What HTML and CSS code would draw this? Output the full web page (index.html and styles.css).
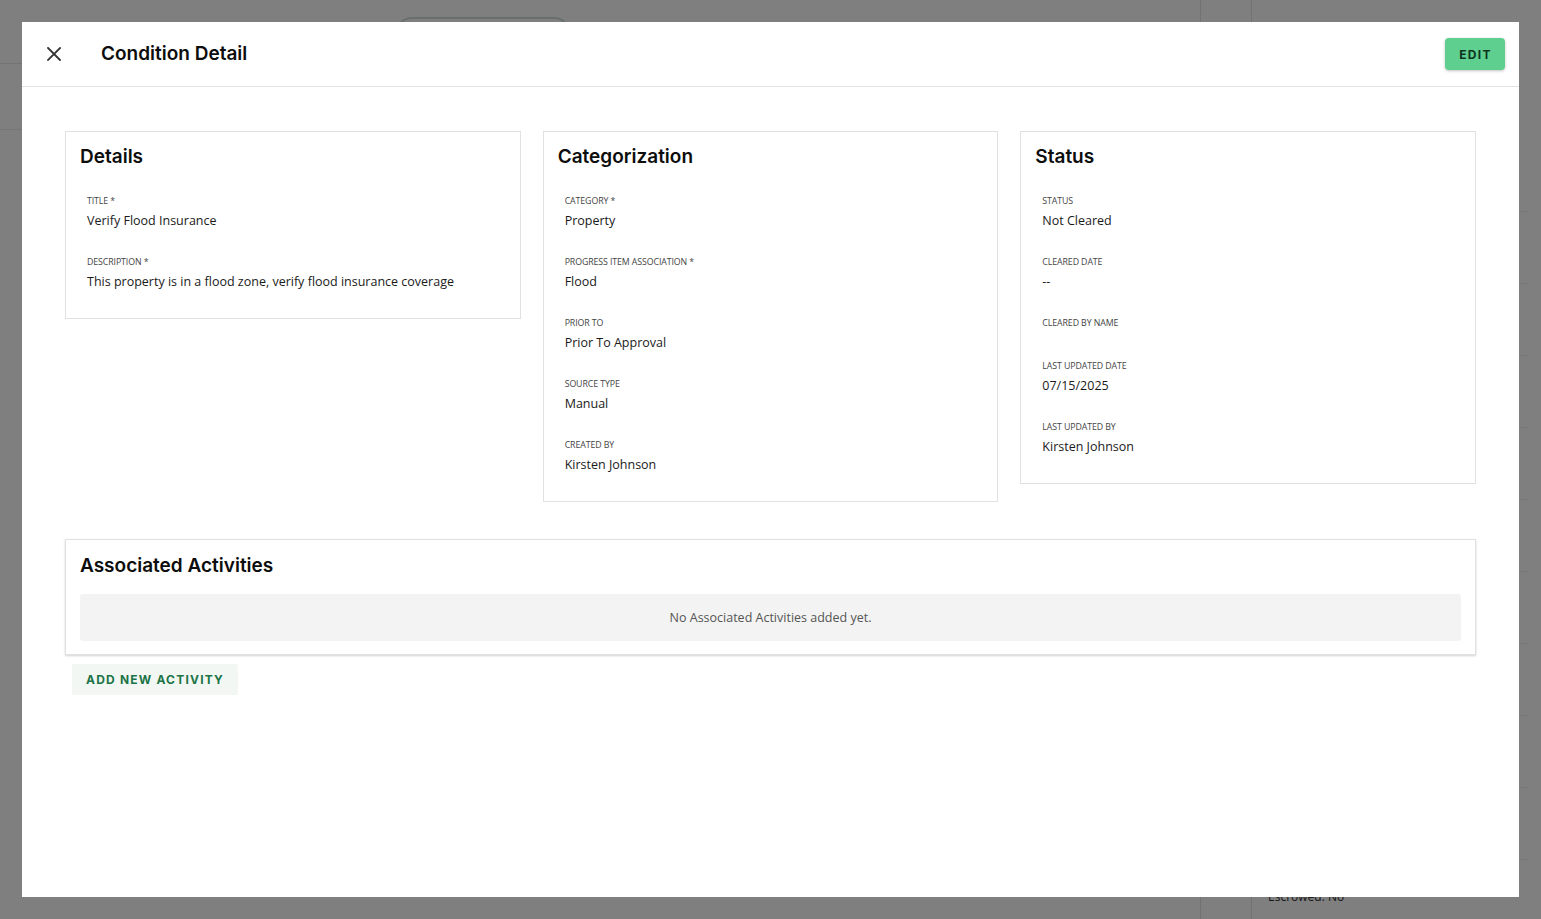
FILE: index.html
```html
<!DOCTYPE html>
<html lang="en">
<head>
<meta charset="utf-8">
<title>Condition Detail</title>
<link rel="stylesheet" href="styles.css">
</head>
<body>
<div class="page">
  <div class="page-main">
    <div class="page-header"><span class="page-pill"></span></div>
    <div class="page-subbar"></div>
  </div>
  <div class="page-gutter"></div>
  <div class="page-side">
    <div class="side-row"></div>
    <div class="side-row"></div>
    <div class="side-row"></div>
    <div class="side-row"></div>
    <div class="side-row"></div>
    <div class="side-row"></div>
    <div class="side-row"></div>
    <div class="side-row"></div>
    <div class="side-row"></div>
    <div class="side-row"></div>
    <div class="side-foot">Escrowed: No</div>
  </div>
</div>
<div class="backdrop"></div>

<div class="modal" role="dialog" aria-label="Condition Detail">
  <header class="modal-header">
    <button class="close-btn" aria-label="Close">
      <svg width="14" height="14" viewBox="0 0 14 14"><path d="M1 1 L13 13 M13 1 L1 13" stroke="#333" stroke-width="1.8" stroke-linecap="square" fill="none"/></svg>
    </button>
    <h1 class="modal-title">Condition Detail</h1>
    <button class="edit-btn">EDIT</button>
  </header>

  <div class="modal-body">
    <div class="cards">
      <section class="card">
        <h2 class="card-title">Details</h2>
        <div class="fields">
          <div class="field"><div class="label">Title *</div><div class="value">Verify Flood Insurance</div></div>
          <div class="field"><div class="label">Description *</div><div class="value">This property is in a flood zone, verify flood insurance coverage</div></div>
        </div>
      </section>

      <section class="card">
        <h2 class="card-title">Categorization</h2>
        <div class="fields">
          <div class="field"><div class="label">Category *</div><div class="value">Property</div></div>
          <div class="field"><div class="label">Progress Item Association *</div><div class="value">Flood</div></div>
          <div class="field"><div class="label">Prior To</div><div class="value">Prior To Approval</div></div>
          <div class="field"><div class="label">Source Type</div><div class="value">Manual</div></div>
          <div class="field"><div class="label">Created By</div><div class="value">Kirsten Johnson</div></div>
        </div>
      </section>

      <section class="card">
        <h2 class="card-title">Status</h2>
        <div class="fields">
          <div class="field"><div class="label">Status</div><div class="value">Not Cleared</div></div>
          <div class="field"><div class="label">Cleared Date</div><div class="value">--</div></div>
          <div class="field"><div class="label">Cleared By Name</div><div class="value empty"></div></div>
          <div class="field"><div class="label">Last Updated Date</div><div class="value">07/15/2025</div></div>
          <div class="field"><div class="label">Last Updated By</div><div class="value">Kirsten Johnson</div></div>
        </div>
      </section>
    </div>

    <section class="card activities">
      <h2 class="card-title">Associated Activities</h2>
      <div class="empty-box">No Associated Activities added yet.</div>
    </section>

    <button class="add-btn">ADD NEW ACTIVITY</button>
  </div>
</div>
</body>
</html>
```

FILE: styles.css
```css
* { box-sizing: border-box; }

html, body {
  margin: 0;
  padding: 0;
  height: 919px;
  overflow: hidden;
  font-family: "Segoe UI", "Open Sans", "Noto Sans", sans-serif;
}

/* underlying page (dimmed) */
.page {
  display: grid;
  grid-template-columns: 1200px 52px 1fr;
  height: 919px;
  background: #fff;
}
.page-header {
  height: 64px;
  border-bottom: 1px solid #e6e6e6;
  padding: 17px 0 0 395px;
}
.page-pill {
  display: block;
  width: 176px;
  height: 34px;
  border: 2px solid #cfe0d8;
  border-radius: 17px;
}
.page-subbar {
  height: 66px;
  border-bottom: 1px solid #ececec;
}
.page-gutter {
  border-left: 1px solid #e4e4e4;
  border-right: 1px solid #e4e4e4;
}
.page-side {
  display: flex;
  flex-direction: column;
  padding: 140px 12px 0 16px;
}
.side-row {
  height: 72px;
  border-bottom: 1px solid #f0f0f0;
}
.side-foot {
  margin-top: auto;
  padding-bottom: 14px;
  font-size: 12px;
  color: #333;
}

.backdrop {
  position: fixed;
  inset: 0;
  background: rgba(0, 0, 0, 0.5);
}

/* modal */
.modal {
  position: absolute;
  left: 22px;
  top: 22px;
  width: 1497px;
  height: 875px;
  background: #fff;
  display: flex;
  flex-direction: column;
}

.modal-header {
  height: 65px;
  flex: none;
  border-bottom: 1px solid #e2e2e2;
  display: flex;
  align-items: center;
  padding: 0 14px 0 25px;
}

.close-btn {
  width: 14px;
  height: 14px;
  padding: 0;
  border: 0;
  background: none;
  display: flex;
}

.modal-title {
  margin: -2px 0 0 40px;
  font-family: "Inter", "Open Sans", sans-serif;
  font-weight: 600;
  font-size: 19px;
  color: #0d0d0d;
  flex: 1;
}

.edit-btn {
  width: 60px;
  height: 32px;
  border: 0;
  border-radius: 4px;
  background: #5fcf8f;
  color: #0c3520;
  font-family: "Inter", "Open Sans", sans-serif;
  font-weight: 700;
  font-size: 12px;
  letter-spacing: 1.3px;
  box-shadow: 0 1px 3px rgba(0, 0, 0, 0.25);
  padding: 0 0 0 1px;
}

.modal-body {
  padding: 44px 43px 0 43px;
}

.cards {
  display: grid;
  grid-template-columns: repeat(3, 1fr);
  column-gap: 22px;
  align-items: start;
}

.card {
  border: 1px solid #e1e1e1;
  padding: 13px 14px 26px 14px;
}

.card-title {
  margin: 0;
  font-family: "Inter", "Open Sans", sans-serif;
  font-weight: 600;
  font-size: 19px;
  line-height: 24px;
  color: #0d0d0d;
}

.fields {
  padding: 26px 7px 0 7px;
  display: flex;
  flex-direction: column;
  gap: 25px;
}

.label {
  font-size: 8.8px;
  line-height: 12px;
  text-transform: uppercase;
  color: #444;
  letter-spacing: -0.1px;
}

.value {
  margin-top: 4px;
  font-size: 12.5px;
  line-height: 20px;
  color: #1a1a1a;
}
.value.empty {
  min-height: 2px;
  line-height: 2px;
}

.activities {
  margin-top: 37px;
  padding-top: 14px;
  padding-bottom: 13px;
  box-shadow: 0 1px 2px rgba(0, 0, 0, 0.18);
}

.empty-box {
  margin-top: 16px;
  height: 47px;
  border-radius: 3px;
  background: #f3f3f3;
  display: flex;
  align-items: center;
  justify-content: center;
  font-size: 12.5px;
  color: #555;
}

.add-btn {
  margin: 9px 0 0 7px;
  width: 166px;
  height: 31px;
  border: 0;
  border-radius: 2px;
  background: #f2f7f4;
  color: #1c7446;
  font-family: "Inter", "Open Sans", sans-serif;
  font-weight: 700;
  font-size: 12px;
  letter-spacing: 1.2px;
  padding: 0;
}
```
